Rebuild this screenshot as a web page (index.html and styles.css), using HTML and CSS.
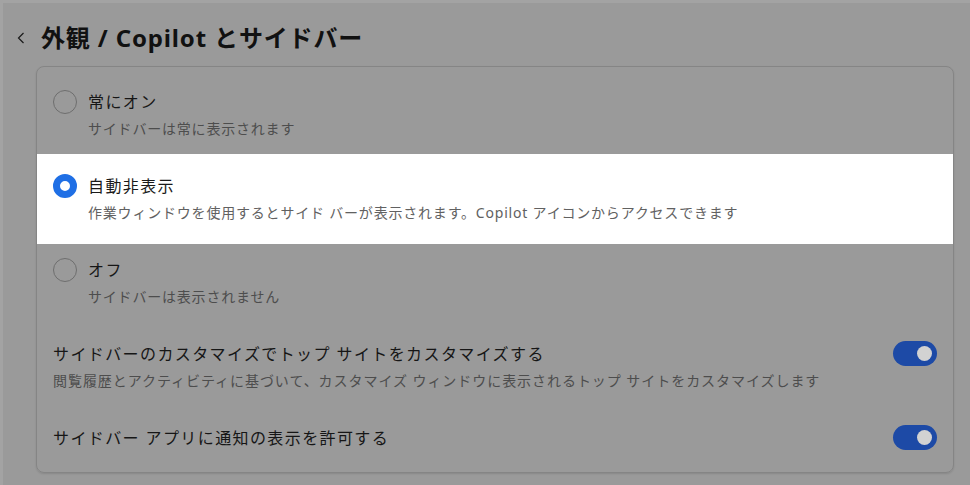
FILE: index.html
```html
<!DOCTYPE html>
<html lang="ja">
<head>
    <meta charset="UTF-8">
    <title>外観 / Copilot とサイドバー</title>
    <link rel="stylesheet" href="styles.css">
</head>
<body>
    <div class="page">
        <div class="header">
            <button class="back" aria-label="戻る">
                <svg width="8" height="12" viewBox="0 0 8 12"><path d="M6.5 1 L1.5 6 L6.5 11" fill="none" stroke="#1a1a1a" stroke-width="1.2"/></svg>
            </button>
            <h1 class="title">外観 / Copilot とサイドバー</h1>
        </div>

        <div class="card">
            <div class="option">
                <span class="radio"></span>
                <div class="option-text">
                    <div class="label">常にオン</div>
                    <div class="sub">サイドバーは常に表示されます</div>
                </div>
            </div>

            <div class="option option-active">
                <span class="radio radio-checked"></span>
                <div class="option-text">
                    <div class="label">自動非表示</div>
                    <div class="sub">作業ウィンドウを使用するとサイド バーが表示されます。Copilot アイコンからアクセスできます</div>
                </div>
            </div>

            <div class="option">
                <span class="radio"></span>
                <div class="option-text">
                    <div class="label">オフ</div>
                    <div class="sub">サイドバーは表示されません</div>
                </div>
            </div>

            <div class="setting">
                <div class="option-text">
                    <div class="label">サイドバーのカスタマイズでトップ サイトをカスタマイズする</div>
                    <div class="sub">閲覧履歴とアクティビティに基づいて、カスタマイズ ウィンドウに表示されるトップ サイトをカスタマイズします</div>
                </div>
                <span class="toggle"><span class="knob"></span></span>
            </div>

            <div class="setting">
                <div class="option-text">
                    <div class="label">サイドバー アプリに通知の表示を許可する</div>
                </div>
                <span class="toggle"><span class="knob"></span></span>
            </div>
        </div>
    </div>
</body>
</html>
```

FILE: styles.css
```css
html {
    background-color: #a3a3a3;
}

body {
    margin: 0;
    padding: 3px 0 0 3px;
    font-family: "Noto Sans", "Noto Sans CJK JP", sans-serif;
    color: #161616;
}

.page {
    background-color: #9a9a9a;
    height: 482px;
    padding: 0 16px 0 33px;
    overflow: hidden;
}

.header {
    display: flex;
    align-items: center;
    height: 51px;
    margin-bottom: 12px;
    padding-top: 19px;
    box-sizing: border-box;
}

.back {
    border: none;
    background: none;
    padding: 0;
    margin: 0 16px 0 -19px;
    width: 8px;
    height: 12px;
    display: flex;
}

.title {
    margin: 0;
    font-size: 24px;
    font-weight: 700;
    line-height: 32px;
    letter-spacing: 0.85px;
    color: #111;
}

.card {
    border: 1px solid #858585;
    border-radius: 8px;
    padding: 6px 0 4px;
    box-shadow: 0 1px 2px rgba(0, 0, 0, 0.12);
}

.option {
    display: flex;
    align-items: flex-start;
    gap: 11px;
    padding: 18px 16px;
}

.option-active {
    background-color: #fff;
    margin: -3px 0;
    padding: 21px 16px;
}

.option-active .label {
    color: #1a1a1a;
}

.option-active .sub {
    color: #616161;
}

.radio {
    flex: none;
    width: 24px;
    height: 24px;
    margin-top: -1px;
    border: 1px solid #6e6e6e;
    border-radius: 50%;
    box-sizing: border-box;
}

.radio-checked {
    border: 7px solid #1f6fe5;
    background-color: #fff;
}

.label {
    font-size: 16px;
    line-height: 22px;
    letter-spacing: 1.4px;
}

.sub {
    margin-top: 6px;
    font-size: 14px;
    line-height: 20px;
    letter-spacing: 0.8px;
    color: #4d4d4d;
}

.setting {
    display: flex;
    align-items: flex-start;
    justify-content: space-between;
    padding: 18px 16px;
}

.setting .sub {
    letter-spacing: 0.95px;
}

.toggle {
    flex: none;
    width: 44px;
    height: 25px;
    margin-top: -2px;
    border-radius: 13px;
    background-color: #1d4aa6;
    display: flex;
    align-items: center;
    justify-content: flex-end;
    padding-right: 5px;
    box-sizing: border-box;
}

.knob {
    width: 15px;
    height: 15px;
    border-radius: 50%;
    background-color: #d2d2d2;
}
```
